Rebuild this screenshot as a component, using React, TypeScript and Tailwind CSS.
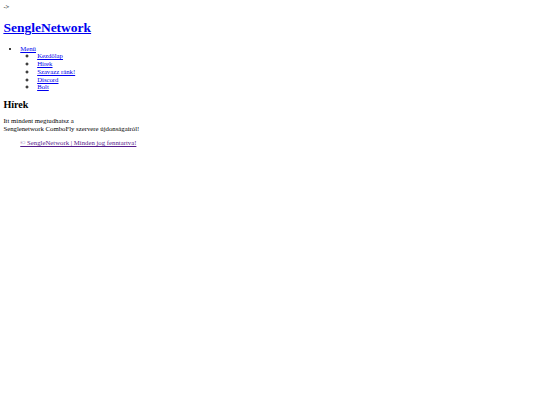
const menuItems = ["Kezdőlap", "Hírek", "Szavazz ránk!", "Discord", "Bolt"];

export default function App() {
  return (
    <div className="min-h-[405px] bg-white p-[3.375px] font-['Liberation_Serif',serif] text-[6.75px] leading-[1.15] text-black">
      <div>-&gt;</div>

      <h1 className="my-[9px] text-[13.5px] font-bold">
        <a href="#" className="text-[#0000EE] underline decoration-[0.5px]">
          SengleNetwork
        </a>
      </h1>

      <ul className="my-[6.75px] list-disc pl-[16.875px]">
        <li>
          <a href="#" className="text-[#0000EE] underline decoration-[0.5px]">
            Menü
          </a>
          <ul className="list-[circle] pl-[16.875px]">
            {menuItems.map((item) => (
              <li key={item}>
                <a href="#" className="text-[#0000EE] underline decoration-[0.5px]">
                  {item}
                </a>
              </li>
            ))}
          </ul>
        </li>
      </ul>

      <h2 className="mt-[7.4px] mb-[7.4px] text-[10.125px] leading-[1.12] font-bold">Hírek</h2>

      <p className="my-[6.75px] leading-[1.12]">
        Itt mindent megtudhatsz a
        <br />
        Senglenetwork ComboFly szervere újdonságairól!
      </p>

      <blockquote className="mx-[16.875px] my-[6.75px] leading-[1.12]">
        <a href="#" className="text-[#551A8B] underline decoration-[0.5px]">
          © SengleNetwork | Minden jog fenntartva!
        </a>
      </blockquote>
    </div>
  );
}
